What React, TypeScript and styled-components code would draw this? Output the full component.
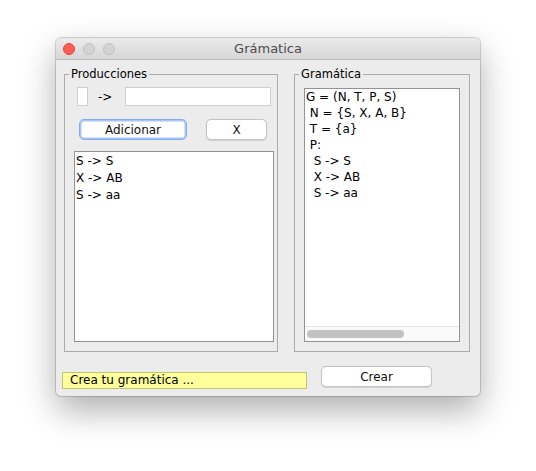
import { createGlobalStyle } from "styled-components";
import styled from "styled-components";

const productions = ["S -> S", "X -> AB", "S -> aa"];

const grammarText = [
  "G = (N, T, P, S)",
  " N = {S, X, A, B}",
  " T = {a}",
  " P:",
  ...productions.map((p) => "  " + p),
];

const App = () => {
  return (
    <Page>
      <GlobalStyle />
      <Window>
        {/* barra de titulo */}
        <TitleBar>
          <Lights>
            <Light $color="#fd5c55" $edge="#de463f" />
            <Light $color="#d3d3d3" $edge="#c2c2c2" />
            <Light $color="#d3d3d3" $edge="#c2c2c2" />
          </Lights>
          <Title>Grámatica</Title>
        </TitleBar>
        <Body>
          <Groups>
            <Group>
              <Legend>Producciones</Legend>
              <LeftContent>
                <FieldRow>
                  <SmallField />
                  <Arrow>-&gt;</Arrow>
                  <BigField />
                </FieldRow>
                <ButtonRow>
                  <Button $width={108} $focused>
                    Adicionar
                  </Button>
                  <Button $width={61}>X</Button>
                </ButtonRow>
                <List>
                  {productions.map((p) => (
                    <ListItem key={p}>{p}</ListItem>
                  ))}
                </List>
              </LeftContent>
            </Group>
            <Group>
              <Legend>Gramática</Legend>
              <RightContent>
                <TextArea>
                  <TextLines>
                    {grammarText.map((line, i) => (
                      <TextLine key={i}>{line}</TextLine>
                    ))}
                  </TextLines>
                  <ScrollBar>
                    <Thumb />
                  </ScrollBar>
                </TextArea>
              </RightContent>
            </Group>
          </Groups>
          <Footer>
            <Status>Crea tu gramática ...</Status>
            <Button $width={111}>Crear</Button>
          </Footer>
        </Body>
      </Window>
    </Page>
  );
};

export default App;

const GlobalStyle = createGlobalStyle`
  html, body {
    margin: 0;
    padding: 0;
    background: #ffffff;
  }
  body {
    font-family: "DejaVu Sans", "Liberation Sans", sans-serif;
    color: #000;
  }
`;

const Page = styled.div`
  width: 536px;
  height: 471px;
  padding: 38px 0 0 56px;
  box-sizing: border-box;
  overflow: hidden;
`;

const Window = styled.div`
  width: 424px;
  height: 358px;
  border-radius: 5px;
  background: #ececec;
  overflow: hidden;
  box-shadow: 0 0 0 1px rgba(0, 0, 0, 0.16), 0 14px 34px rgba(0, 0, 0, 0.32);
  display: flex;
  flex-direction: column;
`;

const TitleBar = styled.div`
  height: 22px;
  box-sizing: border-box;
  display: grid;
  grid-template-columns: 1fr auto 1fr;
  align-items: center;
  background: linear-gradient(#ebebeb, #d6d6d6);
  border-bottom: 1px solid #b9b9b9;
`;

const Lights = styled.div`
  display: flex;
  gap: 8px;
  padding-left: 7px;
`;

const Light = styled.span<{ $color: string; $edge: string }>`
  width: 12px;
  height: 12px;
  box-sizing: border-box;
  border-radius: 50%;
  background: ${(p) => p.$color};
  border: 0.5px solid ${(p) => p.$edge};
`;

const Title = styled.div`
  font-size: 13px;
  color: #4d4d4d;
`;

const Body = styled.div`
  padding: 7px 0 0 8px;
  display: flex;
  flex-direction: column;
`;

const Groups = styled.div`
  display: grid;
  grid-template-columns: 214px 176px;
  gap: 16px;
  height: 285px;
`;

const Group = styled.fieldset`
  margin: 0;
  padding: 0;
  min-width: 0;
  border: 1px solid #ababab;
  box-sizing: border-box;
  height: 285px;
`;

const Legend = styled.legend`
  margin-left: 4px;
  padding: 0 2px;
  font-size: 11.5px;
  line-height: 14px;
  color: #000;
`;

const LeftContent = styled.div`
  display: flex;
  flex-direction: column;
  padding: 6px 0 0 9px;
`;

const FieldRow = styled.div`
  display: flex;
  align-items: center;
  height: 19px;
  margin-left: 3px;
`;

const SmallField = styled.div`
  width: 11px;
  height: 19px;
  box-sizing: border-box;
  background: #fff;
  border: 1px solid #cfcfcf;
`;

const Arrow = styled.span`
  width: 27px;
  padding-left: 10px;
  box-sizing: content-box;
  font-size: 12px;
`;

const BigField = styled.div`
  width: 146px;
  height: 19px;
  box-sizing: border-box;
  background: #fff;
  border: 1px solid #cfcfcf;
`;

const ButtonRow = styled.div`
  display: flex;
  gap: 19px;
  margin: 13px 0 0 5px;
`;

const Button = styled.button<{ $width: number; $focused?: boolean }>`
  width: ${(p) => p.$width}px;
  height: 21px;
  box-sizing: border-box;
  padding: 0;
  font-family: "DejaVu Sans", "Liberation Sans", sans-serif;
  font-size: 12px;
  color: #111;
  background: #fff;
  border-radius: 5px;
  border: 1px solid ${(p) => (p.$focused ? "#82aef0" : "#c4c4c4")};
  box-shadow: ${(p) =>
    p.$focused
      ? "inset 0 0 0 1.5px #a6c6f4"
      : "0 0.5px 1px rgba(0, 0, 0, 0.12)"};
`;

const List = styled.div`
  margin-top: 11px;
  width: 200px;
  height: 191px;
  box-sizing: border-box;
  background: #fff;
  border: 1px solid #939393;
  padding: 1px 0 0 1px;
`;

const ListItem = styled.div`
  font-size: 12px;
  line-height: 17px;
  white-space: pre;
`;

const RightContent = styled.div`
  padding: 7px 0 0 9px;
`;

const TextArea = styled.div`
  width: 156px;
  height: 254px;
  box-sizing: border-box;
  background: #fff;
  border: 1px solid #939393;
  display: flex;
  flex-direction: column;
`;

const TextLines = styled.div`
  flex: 1;
  padding-left: 1px;
`;

const TextLine = styled.div`
  font-size: 12px;
  line-height: 16px;
  white-space: pre;
`;

const ScrollBar = styled.div`
  height: 15px;
  box-sizing: border-box;
  background: #fafafa;
  border-top: 1px solid #e6e6e6;
  padding: 3px 0 0 2px;
`;

const Thumb = styled.div`
  width: 97px;
  height: 8px;
  border-radius: 4px;
  background: #c2c2c2;
`;

const Footer = styled.div`
  display: flex;
  align-items: flex-start;
  gap: 14px;
  margin-top: 14px;
  margin-left: -2px;
`;

const Status = styled.div`
  margin-top: 6px;
  width: 245px;
  height: 17px;
  box-sizing: border-box;
  background: #ffff9b;
  border: 1px solid #c4c46e;
  font-size: 12px;
  line-height: 15px;
  padding-left: 7px;
`;
